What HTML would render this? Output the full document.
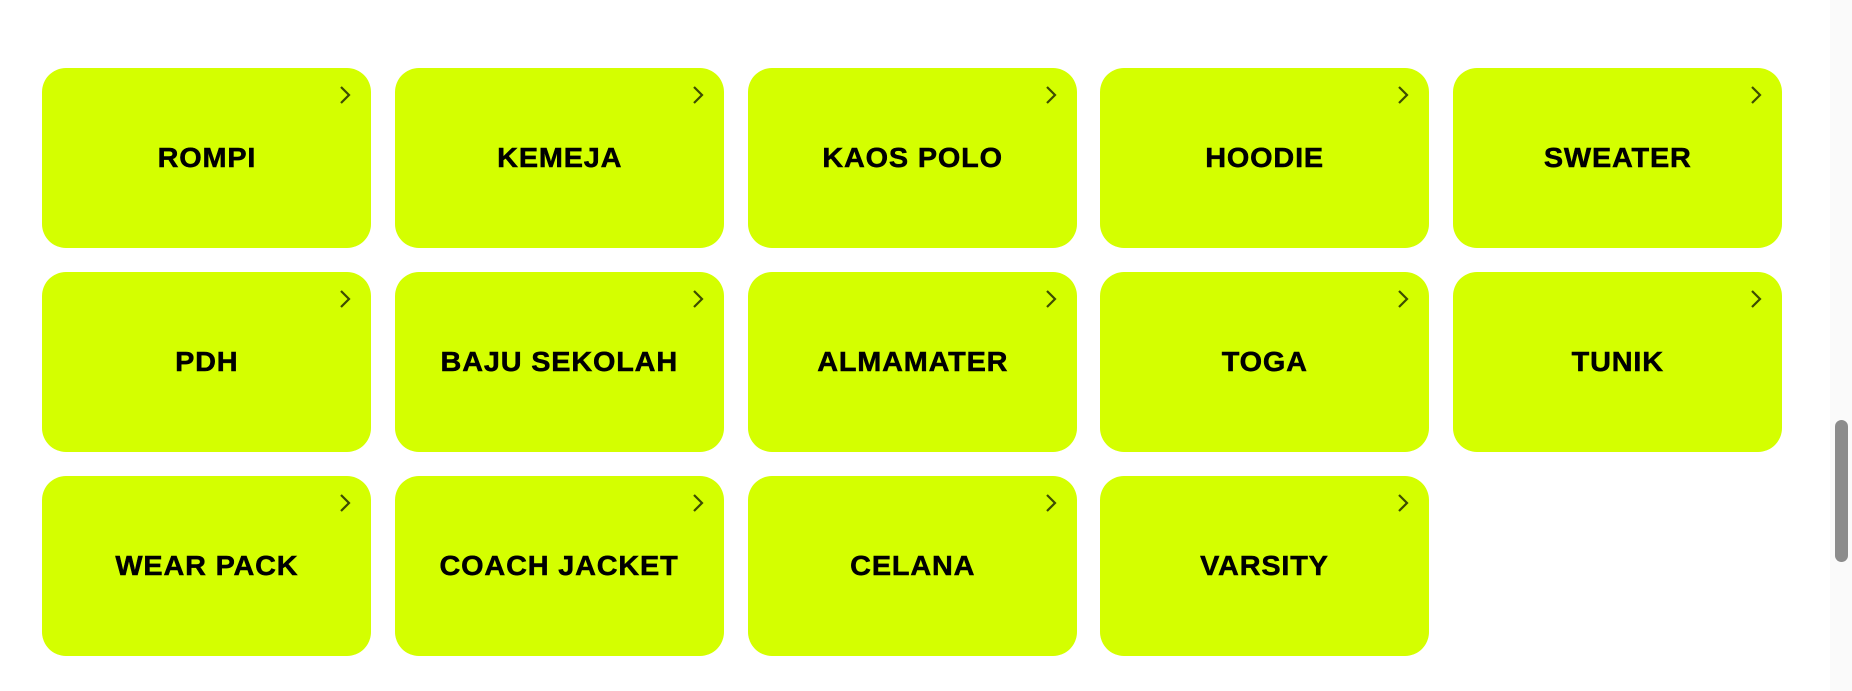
<!DOCTYPE html>
<html><head><meta charset="utf-8"><style>
html,body{margin:0;padding:0;background:#fff;width:1852px;height:691px;overflow:hidden;position:relative}
.card{position:absolute;width:329px;height:180px;background:#d4ff00;border-radius:24px;display:flex;align-items:center;justify-content:center;font-family:"Liberation Sans",sans-serif;font-weight:bold;font-size:28px;letter-spacing:0.8px;color:#000;-webkit-text-stroke:0.5px #000}
.card span{display:inline-block;transform:scaleX(1.03)}
.card svg{position:absolute;left:296px;top:17px}
.track{position:absolute;left:1830px;top:0;width:22px;height:691px;background:#fafafa}
.thumb{position:absolute;left:1835px;top:420px;width:13px;height:142px;background:#8c8c8c;border-radius:7px}
</style></head><body>
<div class="track"></div><div class="thumb"></div>
<div class="card" style="left:42px;top:68px"><span>ROMPI</span><svg width="14" height="20"><path d="M3 2 L11 10 L3 18" fill="none" stroke="#3d4d00" stroke-width="2.2"/></svg></div>
<div class="card" style="left:395px;top:68px"><span>KEMEJA</span><svg width="14" height="20"><path d="M3 2 L11 10 L3 18" fill="none" stroke="#3d4d00" stroke-width="2.2"/></svg></div>
<div class="card" style="left:748px;top:68px"><span>KAOS POLO</span><svg width="14" height="20"><path d="M3 2 L11 10 L3 18" fill="none" stroke="#3d4d00" stroke-width="2.2"/></svg></div>
<div class="card" style="left:1100px;top:68px"><span>HOODIE</span><svg width="14" height="20"><path d="M3 2 L11 10 L3 18" fill="none" stroke="#3d4d00" stroke-width="2.2"/></svg></div>
<div class="card" style="left:1453px;top:68px"><span>SWEATER</span><svg width="14" height="20"><path d="M3 2 L11 10 L3 18" fill="none" stroke="#3d4d00" stroke-width="2.2"/></svg></div>
<div class="card" style="left:42px;top:272px"><span>PDH</span><svg width="14" height="20"><path d="M3 2 L11 10 L3 18" fill="none" stroke="#3d4d00" stroke-width="2.2"/></svg></div>
<div class="card" style="left:395px;top:272px"><span>BAJU SEKOLAH</span><svg width="14" height="20"><path d="M3 2 L11 10 L3 18" fill="none" stroke="#3d4d00" stroke-width="2.2"/></svg></div>
<div class="card" style="left:748px;top:272px"><span>ALMAMATER</span><svg width="14" height="20"><path d="M3 2 L11 10 L3 18" fill="none" stroke="#3d4d00" stroke-width="2.2"/></svg></div>
<div class="card" style="left:1100px;top:272px"><span>TOGA</span><svg width="14" height="20"><path d="M3 2 L11 10 L3 18" fill="none" stroke="#3d4d00" stroke-width="2.2"/></svg></div>
<div class="card" style="left:1453px;top:272px"><span>TUNIK</span><svg width="14" height="20"><path d="M3 2 L11 10 L3 18" fill="none" stroke="#3d4d00" stroke-width="2.2"/></svg></div>
<div class="card" style="left:42px;top:476px"><span>WEAR PACK</span><svg width="14" height="20"><path d="M3 2 L11 10 L3 18" fill="none" stroke="#3d4d00" stroke-width="2.2"/></svg></div>
<div class="card" style="left:395px;top:476px"><span>COACH JACKET</span><svg width="14" height="20"><path d="M3 2 L11 10 L3 18" fill="none" stroke="#3d4d00" stroke-width="2.2"/></svg></div>
<div class="card" style="left:748px;top:476px"><span>CELANA</span><svg width="14" height="20"><path d="M3 2 L11 10 L3 18" fill="none" stroke="#3d4d00" stroke-width="2.2"/></svg></div>
<div class="card" style="left:1100px;top:476px"><span>VARSITY</span><svg width="14" height="20"><path d="M3 2 L11 10 L3 18" fill="none" stroke="#3d4d00" stroke-width="2.2"/></svg></div>
</body></html>
